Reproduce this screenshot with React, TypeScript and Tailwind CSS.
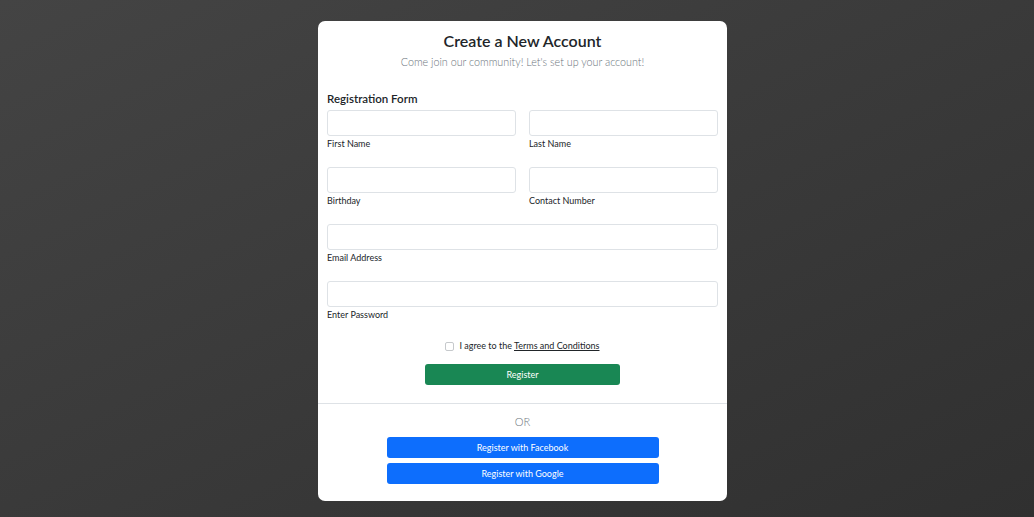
import React from "react";

function Field({ label, full }: { label: string; full?: boolean }) {
  return (
    <div className={full ? "col-span-2 flex flex-col" : "flex flex-col"}>
      <div className="h-[26px] rounded-[3px] border border-[#dee2e6] bg-white" />
      <div className="mt-[2px] h-[12px] text-[9px] leading-[12px] text-[#212529]">{label}</div>
    </div>
  );
}

export default function App() {
  return (
    <div
      className="flex min-h-[517px] w-full justify-center bg-gradient-to-br from-[#444444] to-[#303030] pl-[11px]"
      style={{ fontFamily: 'Lato, "Noto Sans", sans-serif' }}
    >
      <div className="mt-[21px] mb-[16px] flex h-[480px] w-[409px] flex-col rounded-[7px] bg-white">
        <div className="px-[9px] pt-[8px]">
          <div className="h-[24px] text-center text-[16px] font-semibold leading-[24px] text-[#212529]">
            Create a New Account
          </div>
          <div className="mt-[1px] h-[16px] text-center text-[10.75px] font-light leading-[16px] text-[#6c757d]">
            Come join our community! Let's set up your account!
          </div>
          <div className="mt-[22px] h-[14px] text-[11.5px] font-semibold leading-[14px] text-[#212529]">
            Registration Form
          </div>
          <div className="mt-[4px] grid grid-cols-2 gap-x-[13px] gap-y-[17px]">
            <Field label="First Name" />
            <Field label="Last Name" />
            <Field label="Birthday" />
            <Field label="Contact Number" />
            <Field label="Email Address" full />
            <Field label="Enter Password" full />
          </div>
          <div className="mt-[18px] flex h-[14px] items-center justify-center text-[9px] leading-[14px] text-[#212529]">
            <span className="mr-[5px] inline-block h-[9px] w-[9px] rounded-[2px] border border-[#c6c9cc] bg-white" />
            <span>
              I agree to the <span className="underline">Terms and Conditions</span>
            </span>
          </div>
          <div className="mt-[11px] flex justify-center">
            <div className="flex h-[21px] w-[195px] items-center justify-center rounded-[3px] bg-[#198754] pt-[1px] text-[9px] text-white">
              Register
            </div>
          </div>
        </div>
        <div className="mt-[18px] border-t border-[#dee2e6]" />
        <div className="mt-[10px] h-[16px] text-center text-[11px] font-light leading-[16px] text-[#6c757d]">
          OR
        </div>
        <div className="mt-[7px] flex flex-col items-center gap-[5px]">
          <div className="flex h-[21px] w-[272px] items-center justify-center rounded-[3px] bg-[#0d6efd] pt-[1px] text-[9px] text-white">
            Register with Facebook
          </div>
          <div className="flex h-[21px] w-[272px] items-center justify-center rounded-[3px] bg-[#0d6efd] pt-[1px] text-[9px] text-white">
            Register with Google
          </div>
        </div>
      </div>
    </div>
  );
}
